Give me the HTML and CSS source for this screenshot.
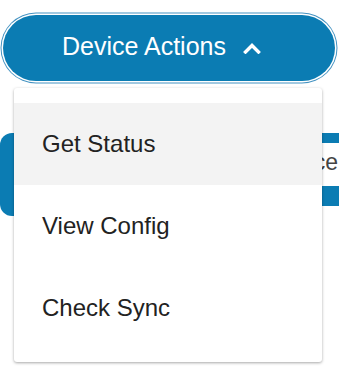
FILE: index.html
```html
<!DOCTYPE html>
<html lang="en">
<head>
    <meta charset="UTF-8">
    <meta name="viewport" content="width=device-width, initial-scale=1.0">
    <title>Device Actions</title>
    <link rel="stylesheet" href="styles.css">
</head>
<body>
    <div class="dropdown">
        <button class="dropdown-toggle">
            <span>Device Actions</span>
            <svg class="chevron" width="18" height="12" viewBox="0 0 18 12">
                <path d="M2.5 10 L9 3.5 L15.5 10" fill="none" stroke="#fff" stroke-width="3.4" stroke-linecap="square"/>
            </svg>
        </button>

        <ul class="dropdown-menu">
            <li class="menu-item active">Get Status</li>
            <li class="menu-item">View Config</li>
            <li class="menu-item">Check Sync</li>
        </ul>
    </div>

    <!-- content sitting behind the open menu -->
    <div class="panel">
        <div class="panel-edge"></div>
        <div class="panel-body">
            <div class="panel-top"></div>
            <div class="panel-field">Select Device</div>
            <div class="panel-bottom"></div>
        </div>
    </div>
</body>
</html>
```

FILE: styles.css
```css
* {
    margin: 0;
    padding: 0;
    box-sizing: border-box;
    font-family: 'Liberation Sans', Arial, sans-serif;
}

html,
body {
    min-height: 100%;
}

body {
    background: #fff;
    min-height: 366px;
    padding: 15px 4px 0 3px;
}

.dropdown {
    position: relative;
    z-index: 2;
}

.dropdown-toggle {
    width: 100%;
    height: 66px;
    display: flex;
    align-items: center;
    justify-content: center;
    gap: 17px;
    padding: 0 15px 3px 0;
    background: #0b7cb3;
    color: #fff;
    font-size: 25px;
    border: none;
    border-radius: 33px;
    box-shadow: 0 0 0 1.5px #fff, 0 0 0 2.5px #4593c2;
    cursor: pointer;
}

.chevron {
    margin-top: 2px;
}

.dropdown-menu {
    position: absolute;
    top: 73px;
    left: 11px;
    width: 308px;
    padding: 15px 0 13px;
    list-style: none;
    background: #fff;
    border-radius: 3px;
    box-shadow: 0 1px 3px rgba(0, 0, 0, 0.35);
}

.menu-item {
    height: 82px;
    display: flex;
    align-items: center;
    padding-left: 28px;
    font-size: 24px;
    color: #222;
}

.menu-item.active {
    background: #f3f3f3;
}

.panel {
    display: flex;
    height: 83px;
    margin: 52px -4px 0 -3px;
}

.panel-edge {
    width: 40px;
    background: #0b7cb3;
    border-radius: 12px 0 0 12px;
}

.panel-body {
    flex: 1;
    display: flex;
    flex-direction: column;
}

.panel-top {
    height: 10px;
    background: #0b7cb3;
}

.panel-field {
    height: 43px;
    background: #fff;
    color: #444;
    font-size: 23px;
    text-align: right;
    padding: 6px 1px 0 0;
    white-space: nowrap;
    overflow: hidden;
}

.panel-bottom {
    height: 20px;
    background: #0b7cb3;
}
```
